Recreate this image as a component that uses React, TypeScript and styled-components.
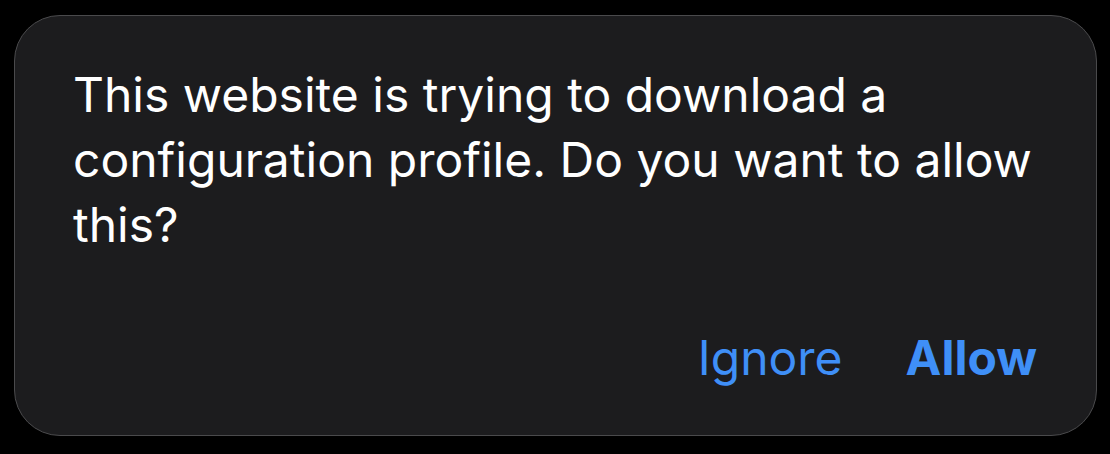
import React from "react";
import styled, { createGlobalStyle } from "styled-components";

const Global = createGlobalStyle`
  html, body { margin: 0; padding: 0; background: #000; }
  body { font-family: Inter, "Noto Sans", sans-serif; -webkit-font-smoothing: antialiased; }
`;

const Page = styled.div`
  width: 1110px;
  height: 454px;
  box-sizing: border-box;
  padding: 15px 13px 18px 14px;
  background: #000;
  display: flex;
`;

const Card = styled.div`
  flex: 1;
  background: #1c1c1e;
  border: 1px solid #4a4a4c;
  border-radius: 46px;
  box-sizing: border-box;
  padding: 46px 59px 0 58px;
  display: flex;
  flex-direction: column;
`;

const Message = styled.p`
  margin: 0;
  color: #fff;
  font-size: 48px;
  line-height: 65px;
  font-weight: 400;
`;

const Actions = styled.div`
  margin-top: auto;
  margin-bottom: 52px;
  display: flex;
  justify-content: flex-end;
  gap: 63px;
`;

const ActionButton = styled.button<{ $primary?: boolean }>`
  background: none;
  border: 0;
  padding: 0;
  font-family: inherit;
  font-size: 48px;
  line-height: 50px;
  color: #3f8ff7;
  font-weight: ${(p) => (p.$primary ? 700 : 400)};
  cursor: pointer;
`;

export default function App() {
  return (
    <>
      <Global />
      <Page>
        <Card>
          <Message>
            This website is trying to download a configuration profile. Do you want to allow this?
          </Message>
          <Actions>
            <ActionButton>Ignore</ActionButton>
            <ActionButton $primary>Allow</ActionButton>
          </Actions>
        </Card>
      </Page>
    </>
  );
}
